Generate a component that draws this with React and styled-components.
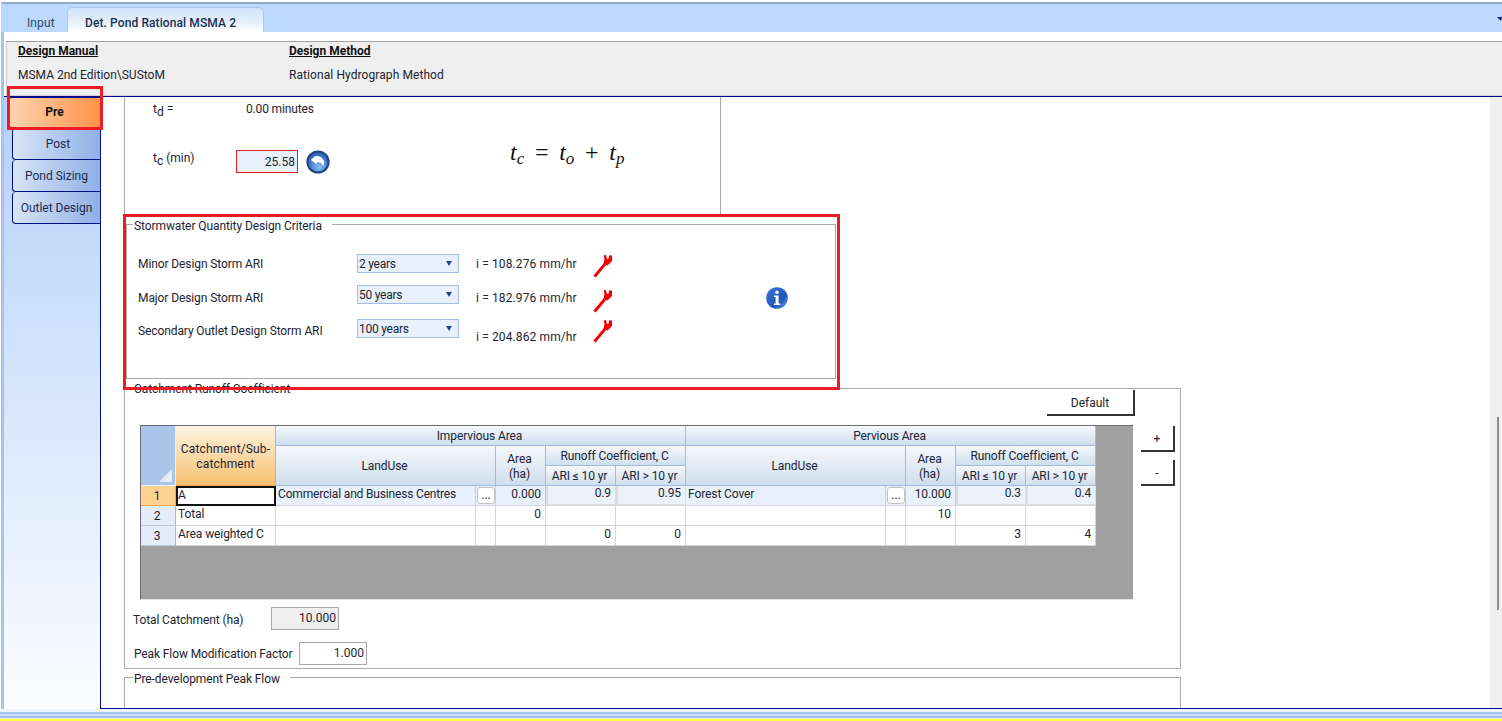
import React from "react";
import styled, { createGlobalStyle } from "styled-components";

const Global = createGlobalStyle`
  html, body { margin: 0; padding: 0; background: #fff; overflow: hidden; }
  * { box-sizing: border-box; }
`;

const FONT = `Roboto, "Liberation Sans", sans-serif`;

const Page = styled.div`
  position: relative;
  width: 1502px;
  height: 721px;
  overflow: hidden;
  display: flex;
  flex-direction: column;
  background: #fff;
  font: 12px/16px ${FONT};
  color: #1c2430;
`;
const Highlight = styled.div`
  position: absolute;
  left: ${(p) => p.$x}px;
  top: ${(p) => p.$y}px;
  width: ${(p) => p.$w}px;
  height: ${(p) => p.$h}px;
  border: 3px solid #ed1c24;
  pointer-events: none;
`;
const Frame = styled.div`
  flex: 1;
  min-height: 0;
  display: flex;
  flex-direction: column;
  margin: 2px 0 0 1px;
  border-left: 3px solid #a6c3ef;
  border-top: 2px solid #8fa8cc;
`;
const TabStrip = styled.div`
  height: 28px;
  margin-left: -3px;
  padding-left: 3px;
  background: #bcd8ff;
  display: flex;
  align-items: flex-end;
  position: relative;
`;
const Tab = styled.div`
  height: ${(p) => (p.$active ? 25 : 22)}px;
  width: ${(p) => p.$w}px;
  padding: ${(p) => (p.$active ? 7 : 5)}px 0 0 ${(p) => p.$pl}px;
  border-radius: 5px 5px 0 0;
  color: ${(p) => (p.$active ? "#1b2f55" : "#2b4a70")};
  font-weight: ${(p) => (p.$active ? 500 : 400)};
  letter-spacing: 0.1px;
  ${(p) =>
    p.$active
      ? `background: linear-gradient(#cfe2fb, #e6f0fd 60%, #fff); border: 1px solid #a9c8f0; border-bottom: 0;`
      : ""}
`;
const TabMenu = styled.div`
  position: absolute;
  right: 0;
  top: 13px;
  width: 0;
  height: 0;
  border-left: 4px solid transparent;
  border-right: 1px solid transparent;
  border-top: 4px solid #0a1f78;
`;
const Body = styled.div`
  flex: 1;
  min-height: 0;
  display: flex;
  flex-direction: column;
  padding-top: 9px;
`;
const HeaderBar = styled.div`
  height: 55px;
  margin-left: 2px;
  background: #efefef;
  border-top: 1px solid #a2a2a2;
  border-left: 1px solid #c8c8c8;
  border-bottom: 1px solid #d2d2d2;
  display: grid;
  grid-template-columns: 271px 1fr;
  padding: 1px 0 0 11px;
`;
const HeaderCol = styled.div`
  display: flex;
  flex-direction: column;
  gap: 8px;
`;
const HeaderTitle = styled.div`
  font-weight: 700;
  text-decoration: underline;
  color: #111;
`;
const HeaderValue = styled.div`
  letter-spacing: ${(p) => p.$ls || 0}px;
`;
const Workspace = styled.div`
  flex: 1;
  min-height: 0;
  display: flex;
  border-top: 1px solid #000a8c;
`;
const Sidebar = styled.nav`
  width: 96px;
  flex: none;
  display: flex;
  flex-direction: column;
  align-items: flex-end;
  background: linear-gradient(#b4d0fa, #fbfdff);
`;
const SideTab = styled.div`
  width: ${(p) => (p.$active ? 92 : 88)}px;
  height: ${(p) => (p.$active ? 31 : 32)}px;
  display: flex;
  align-items: center;
  justify-content: center;
  text-align: center;
  padding: ${(p) => (p.$active ? "0 0 2px" : `0 0 0 ${p.$pad || 0}px`)};
  border: 1px solid #00107e;
  border-right: 0;
  border-top: ${(p) => (p.$active ? 1 : 0)}px solid #00107e;
  border-radius: 4px 0 0 4px;
  font-weight: ${(p) => (p.$active ? 700 : 400)};
  color: ${(p) => (p.$active ? "#111" : "#1b2c4c")};
  background: ${(p) =>
    p.$active
      ? "linear-gradient(90deg, #fdd4b2, #ff9347)"
      : "linear-gradient(90deg, #d7e4f6, #8fb0e6)"};
`;
const Main = styled.main`
  flex: 1;
  min-width: 0;
  display: flex;
  border-left: 1px solid #00107e;
  border-bottom: 1px solid #000a8c;
`;
const Scroller = styled.div`
  flex: 1;
  min-width: 0;
  overflow: hidden;
  padding-left: 23px;
`;
const Scrollbar = styled.div`
  width: 12px;
  flex: none;
  background: #efefef;
  padding: 320px 0 0 7px;
`;
const ScrollThumb = styled.div`
  width: 2px;
  height: 193px;
  background: #8c8c8c;
`;
const TopBlock = styled.section`
  width: 597px;
  height: 118px;
  border: 1px solid #a8a8a8;
  border-top: 0;
  padding: 4px 0 0 28px;
`;
const FlowRow = styled.div`
  display: flex;
  align-items: flex-start;
  margin-top: ${(p) => p.$mt || 0}px;
`;
const QtyLabel = styled.div`
  width: ${(p) => p.$w}px;
  flex: none;
  margin-top: ${(p) => p.$mt || 0}px;
  letter-spacing: ${(p) => p.$ls || 0}px;
  white-space: nowrap;
`;
const Minutes = styled.div`
  letter-spacing: -0.15px;
`;
const Sub = styled.sub`
  font-size: 12px;
  line-height: 0;
  vertical-align: -3px;
`;
const ValueField = styled.input`
  width: 62px;
  height: 23px;
  border: 1px solid #ee1c25;
  background: #e8f1fb;
  text-align: right;
  padding: 0 2px;
  font: inherit;
  color: inherit;
  outline: 0;
`;
const IconBox = styled.span`
  display: block;
  flex: none;
  line-height: 0;
  margin-left: ${(p) => p.$ml || 0}px;
  margin-top: ${(p) => p.$mt || 0}px;
`;
const Formula = styled.div`
  margin: -13px 0 0 180px;
  font: italic 24px/30px "Liberation Serif", serif;
  color: #111;
  white-space: nowrap;
  sub {
    font-size: 17px;
    line-height: 0;
    vertical-align: -4px;
  }
  b {
    font-weight: 400;
    font-style: normal;
    margin: 0 4.7px;
  }
`;
const GroupBox = styled.section`
  position: relative;
  width: ${(p) => p.$w}px;
  height: ${(p) => p.$h}px;
  margin: ${(p) => p.$mt}px 0 0 ${(p) => p.$ml || 0}px;
  border: 1px solid #a8a8a8;
`;
const Legend = styled.div`
  position: absolute;
  left: ${(p) => p.$left}px;
  top: ${(p) => p.$top || -7}px;
  padding: 0 10px 0 1px;
  background: #fff;
  letter-spacing: -0.09px;
  white-space: nowrap;
`;
const StormBody = styled.div`
  display: flex;
  align-items: center;
  padding: 29px 0 0 11px;
`;
const StormRows = styled.div`
  width: 628px;
  flex: none;
`;
const StormRow = styled.div`
  height: ${(p) => p.$h}px;
  display: flex;
  align-items: flex-start;
`;
const SelectBox = styled.div`
  width: 102px;
  height: 19px;
  flex: none;
  margin-right: 17px;
  border: 1px solid #a4bfe2;
  background: #e8f1fb;
  display: flex;
  align-items: center;
  justify-content: space-between;
  padding: 0 6px 0 1px;
  letter-spacing: -0.25px;
`;
const SelectArrow = styled.span`
  width: 0;
  height: 0;
  border-left: 3.5px solid transparent;
  border-right: 3.5px solid transparent;
  border-top: 5px solid #27458c;
`;
const DefaultRow = styled.div`
  width: 995px;
  margin-left: 15px;
  padding-top: 1px;
  display: flex;
  justify-content: flex-end;
`;
const EdgeButton = styled.button`
  width: ${(p) => p.$w}px;
  height: ${(p) => p.$h}px;
  padding: 2px 0 0;
  background: #fff;
  border: 0;
  border-right: 2px solid #333;
  border-bottom: 2px solid #333;
  font: inherit;
  color: inherit;
`;
const GridRow = styled.div`
  display: flex;
  align-items: flex-start;
  margin: 9px 0 0 15px;
  gap: 8px;
`;
const GridArea = styled.div`
  width: 993px;
  height: 175px;
  flex: none;
  background: #a0a0a0;
  border-top: 1px solid #6c6c6c;
  border-left: 1px solid #6c6c6c;
  border-bottom: 1px solid #e4e4e4;
`;
const Table = styled.table`
  width: 955px;
  table-layout: fixed;
  border-collapse: separate;
  border-spacing: 0;
  font: inherit;
  letter-spacing: -0.1px;
`;
const HeadCell = styled.th`
  height: 20px;
  padding: 2px 2px 0 0;
  font-weight: 400;
  text-align: center;
  line-height: 15px;
  color: #1b2433;
  border-right: 1px solid #9fbcdb;
  border-bottom: 1px solid #9fbcdb;
  background: linear-gradient(#f6f8fb, #cfdeee);
`;
const OrangeHead = styled(HeadCell)`
  border-color: #f2a650;
  background: linear-gradient(#fdf4e3, #f6bf6e);
  padding: 2px 0 0;
  letter-spacing: 0.15px;
`;
const Corner = styled(HeadCell)`
  position: relative;
  background: #a9c5e9;
  border-color: #e8f0fb;
  &::after {
    content: "";
    position: absolute;
    right: 3px;
    bottom: 3px;
    border-left: 13px solid transparent;
    border-bottom: 13px solid #e4edf8;
  }
`;
const RowHead = styled.th`
  height: 20px;
  padding: 0 2px 0 0;
  font-weight: 400;
  text-align: center;
  line-height: 14px;
  border-right: 1px solid #9fbcdb;
  border-bottom: 1px solid ${(p) => (p.$sel ? "#f2a650" : "#b9cbe0")};
  background: ${(p) => (p.$sel ? "#fdd28e" : "#e3ecf8")};
`;
const Cell = styled.td`
  height: 20px;
  padding: 0 4px 4px 2px;
  line-height: 14px;
  letter-spacing: ${(p) => p.$ls ?? -0.1}px;
  white-space: nowrap;
  overflow: hidden;
  text-align: ${(p) => (p.$num ? "right" : "left")};
  border-right: 1px solid ${(p) => (p.$sel ? "#c4d0de" : "#d6d6d6")};
  border-bottom: 1px solid #d6d6d6;
  background: ${(p) => (p.$sel ? "#e8f1fb" : "#fff")};
`;
const InputCell = styled(Cell)`
  background: #ecf2fa;
  border-left: 2px solid #dcdcdc;
  border-right: 1px solid #dcdcdc;
  border-bottom: 2px solid #dcdcdc;
`;
const ActiveCell = styled(Cell)`
  background: #fff;
  border: 2px solid #111;
  padding: 0 1px 2px 0;
`;
const ButtonCell = styled(Cell)`
  padding: 1px;
`;
const DotsButton = styled.button`
  display: block;
  width: 18px;
  height: 17px;
  padding: 0 0 4px;
  background: #fff;
  border: 1px solid #c2c2c2;
  border-radius: 3px;
  font: inherit;
  color: #111;
`;
const SideButtons = styled.div`
  margin-top: 1px;
  display: flex;
  flex-direction: column;
  gap: 8px;
`;
const FieldRow = styled.div`
  display: flex;
  align-items: center;
  margin: ${(p) => p.$mt}px 0 0 ${(p) => p.$ml}px;
`;
const FieldLabel = styled.label`
  width: ${(p) => p.$w}px;
  flex: none;
  padding-top: ${(p) => p.$pt || 0}px;
  letter-spacing: -0.12px;
  white-space: nowrap;
`;
const PlainField = styled.input`
  width: 68px;
  height: 23px;
  padding: 0 2px 2px;
  border: 1px solid #a8a8a8;
  background: ${(p) => (p.readOnly ? "#efefef" : "#fff")};
  text-align: right;
  font: inherit;
  color: inherit;
  outline: 0;
`;
const FooterBands = styled.footer`
  height: 12px;
  flex: none;
  background: linear-gradient(
    #eef4fd 0 3px,
    #a9c6ef 3px 5px,
    #c9ddf8 5px 7px,
    #a3c1ee 7px 9px,
    #e9f0e0 9px 10px,
    #ffff3c 10px
  );
`;

const Refresh = () => (
  <svg width="24" height="24" viewBox="0 0 24 24">
    <defs>
      <radialGradient id="rf" cx="55%" cy="75%" r="65%">
        <stop offset="0" stopColor="#8cc0f0" />
        <stop offset="0.65" stopColor="#4684d2" />
        <stop offset="1" stopColor="#3566b4" />
      </radialGradient>
    </defs>
    <circle cx="12" cy="12" r="11.6" fill="#24407f" />
    <circle cx="12" cy="12" r="9.6" fill="url(#rf)" />
    <path
      d="M4.8 10 8.6 6.4c3.4-1.1 7.6.3 9.8 5.4l-1 4.6c-1.4-3-3.4-4.4-6-4.4l-1.2 2z"
      fill="#fff"
    />
  </svg>
);
const Wrench = () => (
  <svg width="20" height="24" viewBox="0 0 20 24">
    <path d="M2.5 21.5 12 10" stroke="#f40000" strokeWidth="3" strokeLinecap="square" fill="none" />
    <path
      d="M10.5 1.5 13 1l.8 3.8 1.6.1.8-3.7 2.8.4v5.4l-4.5 4.5-4-1.5L11.5 5z"
      fill="#f40000"
    />
  </svg>
);
const Info = () => (
  <svg width="22" height="22" viewBox="0 0 22 22">
    <defs>
      <linearGradient id="inf" x1="0" y1="0" x2="1" y2="1">
        <stop offset="0" stopColor="#3f74d2" />
        <stop offset="0.65" stopColor="#1d55bd" />
        <stop offset="1" stopColor="#7aa6e4" />
      </linearGradient>
    </defs>
    <circle cx="11" cy="11" r="10.8" fill="url(#inf)" />
    <circle cx="11" cy="5.2" r="1.8" fill="#fff" />
    <path d="M8 8.6h4.6v8h1.6V18H8v-1.4h1.6V10H8z" fill="#fff" />
  </svg>
);

const storms = [
  { h: 31, label: "Minor Design Storm ARI", mt: 2, sel: "2 years", i: "i = 108.276 mm/hr", im: 2, wm: 0 },
  { h: 34, label: "Major Design Storm ARI", mt: 5, sel: "50 years", i: "i = 182.976 mm/hr", im: 5, wm: 4 },
  { h: 23, label: "Secondary Outlet Design Storm ARI", mt: 4, sel: "100 years", i: "i = 204.862 mm/hr", im: 10, wm: 0 },
];
const colWidths = [35, 100, 200, 20, 50, 70, 70, 200, 20, 50, 70, 70];

export default function App() {
  return (
    <Page>
      <Global />
      <Frame>
        <TabStrip>
          <Tab $w={63} $pl={23}>Input</Tab>
          <Tab $active $w={197} $pl={17}>Det. Pond Rational MSMA 2</Tab>
          <TabMenu />
        </TabStrip>
        <Body>
          <HeaderBar>
            <HeaderCol>
              <HeaderTitle>Design Manual</HeaderTitle>
              <HeaderValue>MSMA 2nd Edition\SUStoM</HeaderValue>
            </HeaderCol>
            <HeaderCol>
              <HeaderTitle>Design Method</HeaderTitle>
              <HeaderValue $ls={0.08}>Rational Hydrograph Method</HeaderValue>
            </HeaderCol>
          </HeaderBar>
          <Workspace>
            <Sidebar>
              <SideTab $active>Pre</SideTab>
              <SideTab $pad={3}>Post</SideTab>
              <SideTab>Pond Sizing</SideTab>
              <SideTab>Outlet Design</SideTab>
            </Sidebar>
            <Main>
              <Scroller>
                <TopBlock>
                  <FlowRow>
                    <QtyLabel $w={93}>t<Sub>d</Sub> =</QtyLabel>
                    <Minutes>0.00 minutes</Minutes>
                  </FlowRow>
                  <FlowRow $mt={33}>
                    <QtyLabel $w={83}>t<Sub>c</Sub> (min)</QtyLabel>
                    <ValueField readOnly value="25.58" />
                    <IconBox $ml={8}><Refresh /></IconBox>
                    <Formula>
                      t<sub>c</sub><b> = </b>t<sub>o</sub><b> + </b>t<sub>p</sub>
                    </Formula>
                  </FlowRow>
                </TopBlock>

                <GroupBox $w={710} $h={155} $mt={9} $ml={2}>
                  <Legend $left={6}>Stormwater Quantity Design Criteria</Legend>
                  <StormBody>
                    <StormRows>
                      {storms.map((s) => (
                        <StormRow key={s.label} $h={s.h}>
                          <QtyLabel $w={219} $mt={s.mt} $ls={-0.1}>{s.label}</QtyLabel>
                          <SelectBox>
                            {s.sel}
                            <SelectArrow />
                          </SelectBox>
                          <QtyLabel $w={117} $mt={s.im} $ls={0.12}>{s.i}</QtyLabel>
                          <IconBox $mt={s.wm}><Wrench /></IconBox>
                        </StormRow>
                      ))}
                    </StormRows>
                    <IconBox><Info /></IconBox>
                  </StormBody>
                </GroupBox>

                <GroupBox $w={1057} $h={281} $mt={9}>
                  <Legend $left={8} $top={-8}>Catchment Runoff Coefficient</Legend>
                  <DefaultRow>
                    <EdgeButton $w={88} $h={26}>Default</EdgeButton>
                  </DefaultRow>
                  <GridRow>
                    <GridArea>
                      <Table>
                        <colgroup>
                          {colWidths.map((w, i) => (
                            <col key={i} width={w} />
                          ))}
                        </colgroup>
                        <thead>
                          <tr>
                            <Corner rowSpan={3} />
                            <OrangeHead rowSpan={3}>Catchment/Sub-<br />catchment</OrangeHead>
                            <HeadCell colSpan={5}>Impervious Area</HeadCell>
                            <HeadCell colSpan={5}>Pervious Area</HeadCell>
                          </tr>
                          <tr>
                            <HeadCell colSpan={2} rowSpan={2}>LandUse</HeadCell>
                            <HeadCell rowSpan={2}>Area<br />(ha)</HeadCell>
                            <HeadCell colSpan={2}>Runoff Coefficient, C</HeadCell>
                            <HeadCell colSpan={2} rowSpan={2}>LandUse</HeadCell>
                            <HeadCell rowSpan={2}>Area<br />(ha)</HeadCell>
                            <HeadCell colSpan={2}>Runoff Coefficient, C</HeadCell>
                          </tr>
                          <tr>
                            <HeadCell>ARI ≤ 10 yr</HeadCell>
                            <HeadCell>ARI &gt; 10 yr</HeadCell>
                            <HeadCell>ARI ≤ 10 yr</HeadCell>
                            <HeadCell>ARI &gt; 10 yr</HeadCell>
                          </tr>
                        </thead>
                        <tbody>
                          <tr>
                            <RowHead $sel>1</RowHead>
                            <ActiveCell>A</ActiveCell>
                            <Cell $sel $ls={-0.17}>Commercial and Business Centres</Cell>
                            <ButtonCell $sel><DotsButton>...</DotsButton></ButtonCell>
                            <Cell $sel $num>0.000</Cell>
                            <InputCell $num>0.9</InputCell>
                            <InputCell $num>0.95</InputCell>
                            <Cell $sel>Forest Cover</Cell>
                            <ButtonCell $sel><DotsButton>...</DotsButton></ButtonCell>
                            <Cell $sel $num>10.000</Cell>
                            <InputCell $num>0.3</InputCell>
                            <InputCell $num>0.4</InputCell>
                          </tr>
                          <tr>
                            <RowHead>2</RowHead>
                            <Cell>Total</Cell>
                            <Cell /><Cell />
                            <Cell $num>0</Cell>
                            <Cell /><Cell /><Cell /><Cell />
                            <Cell $num>10</Cell>
                            <Cell /><Cell />
                          </tr>
                          <tr>
                            <RowHead>3</RowHead>
                            <Cell>Area weighted C</Cell>
                            <Cell /><Cell /><Cell />
                            <Cell $num>0</Cell>
                            <Cell $num>0</Cell>
                            <Cell /><Cell /><Cell />
                            <Cell $num>3</Cell>
                            <Cell $num>4</Cell>
                          </tr>
                        </tbody>
                      </Table>
                    </GridArea>
                    <SideButtons>
                      <EdgeButton $w={34} $h={26}>+</EdgeButton>
                      <EdgeButton $w={34} $h={26}>-</EdgeButton>
                    </SideButtons>
                  </GridRow>
                  <FieldRow $mt={7} $ml={8}>
                    <FieldLabel $w={138} $pt={2}>Total Catchment (ha)</FieldLabel>
                    <PlainField readOnly value="10.000" />
                  </FieldRow>
                  <FieldRow $mt={12} $ml={9}>
                    <FieldLabel $w={165}>Peak Flow Modification Factor</FieldLabel>
                    <PlainField defaultValue="1.000" />
                  </FieldRow>
                </GroupBox>

                <GroupBox $w={1057} $h={100} $mt={8}>
                  <Legend $left={8}>Pre-development Peak Flow</Legend>
                </GroupBox>
              </Scroller>
              <Scrollbar><ScrollThumb /></Scrollbar>
            </Main>
          </Workspace>
        </Body>
      </Frame>
      <FooterBands />
      <Highlight $x={7} $y={86} $w={96} $h={44} />
      <Highlight $x={123} $y={214} $w={717} $h={176} />
    </Page>
  );
}
